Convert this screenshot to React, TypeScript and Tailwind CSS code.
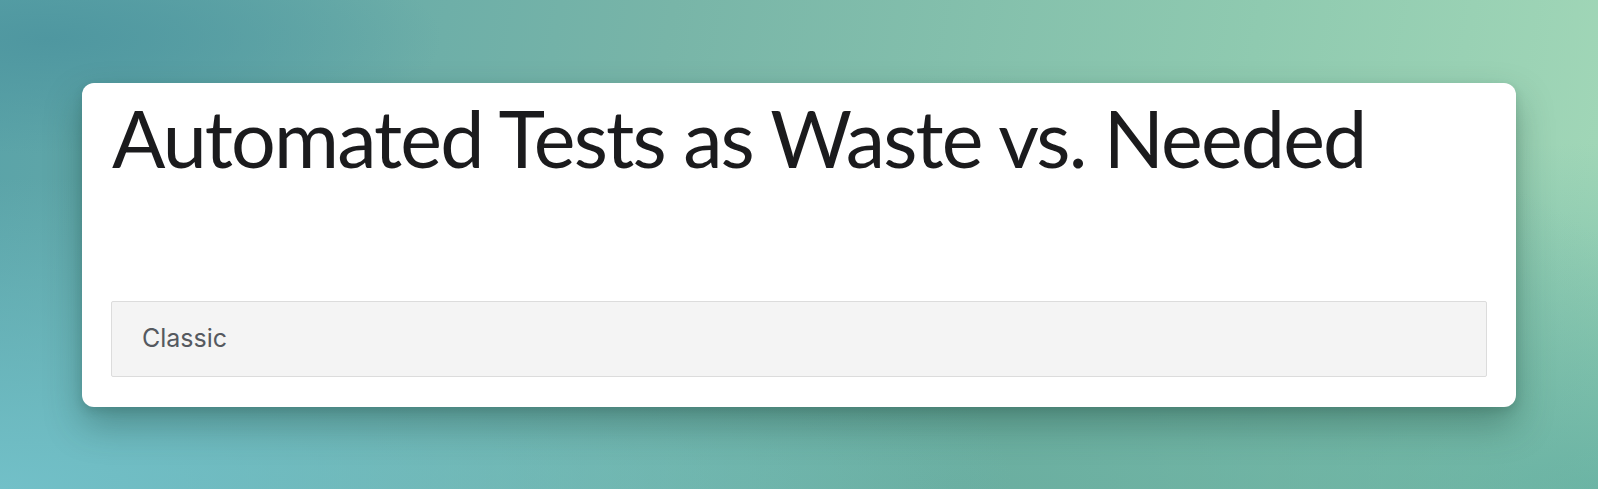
export default function App() {
  return (
    <div className="relative w-[1598px] h-[489px] overflow-hidden bg-[linear-gradient(100deg,#5aa3a8_0%,#78b5a8_40%,#8fcab0_75%,#a3d8b8_100%)]">
      {/* soft colour patches of the backdrop */}
      <div className="absolute inset-0 bg-[radial-gradient(ellipse_at_0%_100%,#72c0c8_0%,rgba(114,192,200,0)_45%),radial-gradient(ellipse_at_3%_8%,#4f97a0_0%,rgba(79,151,160,0)_18%),radial-gradient(ellipse_at_60%_100%,#6aaea0_0%,rgba(106,174,160,0)_60%),radial-gradient(ellipse_at_100%_100%,#6cb6a6_0%,rgba(108,182,166,0)_50%)]" />

      <div className="relative pl-[82px] pt-[83px]">
        <div className="w-[1434px] h-[324px] bg-white rounded-[12px] shadow-[0_18px_36px_rgba(20,60,50,0.35),0_4px_10px_rgba(20,60,50,0.15)] flex flex-col px-[29px] pb-[30px] pt-[7px]">
          <h1 className="font-['Lato','Liberation_Sans',sans-serif] text-[79px] leading-[96px] tracking-[-1.85px] text-[#1b1b1d] font-normal pl-[1px]">
            Automated Tests as Waste vs. Needed
          </h1>
          <div className="mt-auto h-[76px] border border-[#dcdcdc] rounded-[2px] bg-[#f4f4f4] flex items-center pl-[30px]">
            <span className="font-['Inter','Liberation_Sans',sans-serif] text-[25px] text-[#55595f]">Classic</span>
          </div>
        </div>
      </div>
    </div>
  );
}
